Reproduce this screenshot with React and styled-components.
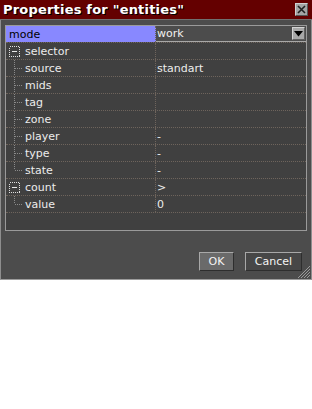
import React from "react";
import styled, { createGlobalStyle } from "styled-components";

const Global = createGlobalStyle`
  html, body { margin: 0; padding: 0; background: #ffffff; }
  body { font-family: "DejaVu Sans", Verdana, sans-serif; }
`;

const Window = styled.div`
  position: relative;
  width: 312px;
  height: 280px;
  box-sizing: border-box;
  background: #4c4c4c;
  border-left: 1px solid #8e8e8e;
  border-right: 1px solid #8e8e8e;
  border-bottom: 1px solid #9c9c9c;
  display: flex;
  flex-direction: column;
`;

const TitleBar = styled.div`
  height: 19px;
  background: #640000;
  border-bottom: 1px solid #707070;
  margin: 0 -1px;
  display: flex;
  align-items: center;
  justify-content: space-between;
  padding: 0 3px 0 3px;
`;

const Title = styled.span`
  color: #ffffff;
  font-family: "DejaVu Sans", Verdana, sans-serif;
  font-weight: bold;
  font-size: 13px;
  letter-spacing: 0.2px;
  line-height: 19px;
  text-shadow: 1px 1px 0 #000;
  white-space: nowrap;
`;

const CloseButton = styled.div`
  width: 13px;
  height: 13px;
  box-sizing: border-box;
  background: #a4a4a4;
  border-top: 1px solid #d0d0d0;
  border-left: 1px solid #d0d0d0;
  border-bottom: 1px solid #555;
  border-right: 1px solid #555;
  display: flex;
  align-items: center;
  justify-content: center;
  margin-right: 1px;
`;

const Body = styled.div`
  flex: 1;
  display: flex;
  flex-direction: column;
  padding: 5px 4px 0 4px;
`;

const Grid = styled.div`
  height: 206px;
  box-sizing: border-box;
  border: 1px solid #9a9a9a;
  background: #404040;
  display: flex;
  flex-direction: column;
`;

const Row = styled.div`
  height: 17px;
  box-sizing: border-box;
  display: flex;
  border-bottom: 1px dotted #6e645c;
`;

const NameCell = styled.div`
  width: 150px;
  box-sizing: border-box;
  border-right: 1px dotted #6e645c;
  display: flex;
  align-items: center;
  padding-left: 3px;
  background: ${(p) => (p.$selected ? "#8888ff" : "transparent")};
  color: ${(p) => (p.$selected ? "#000" : "#ececec")};
  font-size: 11px;
  white-space: nowrap;
`;

const ValueCell = styled.div`
  flex: 1;
  display: flex;
  align-items: center;
  padding-left: 1px;
  color: #ececec;
  font-size: 11px;
  white-space: nowrap;
`;

const Dropdown = styled.div`
  flex: 1;
  height: 16px;
  box-sizing: border-box;
  background: #4c4c4c;
  border-bottom: 1px solid #a8a8a8;
  display: flex;
  align-items: center;
  justify-content: space-between;
  padding-left: 1px;
  padding-right: 1px;
  color: #f0f0f0;
  font-size: 11px;
`;

const DropButton = styled.div`
  width: 13px;
  height: 13px;
  box-sizing: border-box;
  background: #a8a8a8;
  border-top: 1px solid #d4d4d4;
  border-left: 1px solid #d4d4d4;
  border-bottom: 1px solid #606060;
  border-right: 1px solid #606060;
  display: flex;
  align-items: center;
  justify-content: center;
`;

const Label = styled.span`
  margin-left: ${(p) => p.$gap || 0}px;
`;

const Footer = styled.div`
  margin-top: 21px;
  display: flex;
  justify-content: flex-end;
  gap: 11px;
  padding-right: 5px;
`;

const Button = styled.div`
  height: 19px;
  box-sizing: border-box;
  padding: 0 ${(p) => p.$pad}px;
  min-width: ${(p) => p.$w}px;
  display: flex;
  align-items: center;
  justify-content: center;
  font-size: 11px;
  color: #f4f4f4;
  background: ${(p) => (p.$primary ? "#6a6a6a" : "#474747")};
  border-top: 1px solid #a8a8a8;
  border-left: 1px solid #a8a8a8;
  border-bottom: 1px solid #2e2e2e;
  border-right: 1px solid #2e2e2e;
`;

const Grip = styled.svg`
  position: absolute;
  right: 0;
  bottom: 0;
`;

const Toggle = () => (
  <svg width="11" height="11" viewBox="0 0 11 11" shapeRendering="crispEdges">
    <rect x="0.5" y="0.5" width="10" height="10" fill="none" stroke="#e0e0e0" strokeDasharray="1 1" />
    <line x1="3" y1="5.5" x2="8" y2="5.5" stroke="#e8e8e8" />
  </svg>
);

const Connector = ({ last }) => (
  <svg width="16" height="16" viewBox="0 0 16 16" shapeRendering="crispEdges">
    <line x1="5.5" y1="0" x2="5.5" y2={last ? 8 : 16} stroke="#8a8a8a" strokeDasharray="1 1" />
    <line x1="6" y1="8.5" x2="13" y2="8.5" stroke="#8a8a8a" strokeDasharray="1 1" />
  </svg>
);

const rows = [
  { name: "selector", kind: "toggle", value: "" },
  { name: "source", kind: "child", value: "standart" },
  { name: "mids", kind: "child", value: "" },
  { name: "tag", kind: "child", value: "" },
  { name: "zone", kind: "child", value: "" },
  { name: "player", kind: "child", value: "-" },
  { name: "type", kind: "child", value: "-" },
  { name: "state", kind: "child", value: "-", last: true },
  { name: "count", kind: "toggle", value: ">" },
  { name: "value", kind: "child", value: "0", last: true },
];

export default function App() {
  return (
    <>
      <Global />
      <Window>
        <TitleBar>
          <Title>Properties for "entities"</Title>
          <CloseButton>
            <svg width="9" height="9" viewBox="0 0 9 9">
              <path d="M1 1 L8 8 M8 1 L1 8" stroke="#202020" strokeWidth="1.6" />
            </svg>
          </CloseButton>
        </TitleBar>
        <Body>
          <Grid>
            <Row>
              <NameCell $selected>mode</NameCell>
              <Dropdown>
                <span>work</span>
                <DropButton>
                  <svg width="9" height="6" viewBox="0 0 9 6">
                    <path d="M0 0 L9 0 L4.5 5.5 Z" fill="#000" />
                  </svg>
                </DropButton>
              </Dropdown>
            </Row>
            {rows.map((r) => (
              <Row key={r.name}>
                <NameCell>
                  {r.kind === "toggle" ? <Toggle /> : <Connector last={r.last} />}
                  <Label $gap={r.kind === "toggle" ? 5 : 0}>{r.name}</Label>
                </NameCell>
                <ValueCell>{r.value}</ValueCell>
              </Row>
            ))}
          </Grid>
          <Footer>
            <Button $primary $w={35} $pad={4}>OK</Button>
            <Button $w={57} $pad={6}>Cancel</Button>
          </Footer>
        </Body>
        <Grip width="14" height="14" viewBox="0 0 14 14">
          <path d="M13 1 L1 13 M13 4 L4 13 M13 7 L7 13 M13 10 L10 13" stroke="#9a9a9a" strokeWidth="1" />
        </Grip>
      </Window>
    </>
  );
}
